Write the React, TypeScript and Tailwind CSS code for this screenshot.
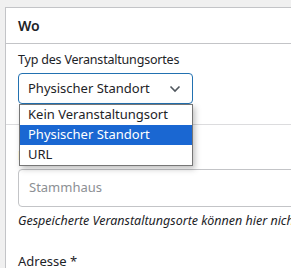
import React from "react";

export default function App() {
  const font = { fontFamily: '"Noto Sans", "Open Sans", sans-serif' };
  return (
    <div
      className="w-[291px] h-[268px] overflow-hidden bg-[#f0f0f0] pl-[5px] pt-[7px] text-[#1d2327]"
      style={font}
    >
      <div className="w-[320px] h-[300px] bg-white border border-[#c3c4c7]">
        <div className="h-[36px] px-[12px] flex items-center border-b border-[#c3c4c7] text-[14px] font-semibold">
          Wo
        </div>
        <div className="px-[12px] pt-[6px]">
          <div className="text-[12.5px] tracking-[-0.2px] leading-[20px]">Typ des Veranstaltungsortes</div>
          <div className="relative mt-[3px] w-[175px]">
            <div className="h-[31px] border border-[#2271b1] rounded-[4px] flex items-center justify-between pl-[9px] pr-[9px] text-[13px]">
              <span>Physischer Standort</span>
              <svg width="12" height="8" viewBox="0 0 12 8" className="mr-[2px]">
                <path d="M1.5 1.5 L6 6 L10.5 1.5" fill="none" stroke="#50575e" strokeWidth="1.6" />
              </svg>
            </div>
            <div className="absolute left-[1px] top-[31px] w-[174px] z-10 bg-white border border-[#767676] shadow-[2px_3px_6px_rgba(0,0,0,0.25)] text-[13px]">
              <div className="h-[20px] flex items-center pl-[8px]">Kein Veranstaltungsort</div>
              <div className="h-[20px] flex items-center pl-[8px] bg-[#1a67d2] text-white">Physischer Standort</div>
              <div className="h-[20px] flex items-center pl-[8px]">URL</div>
            </div>
          </div>
          <div className="mt-[20px] border-t border-[#dcdcde] -mx-[12px]" />
          <div className="mt-[20px] text-[13px] leading-[20px]">
            Name <span className="text-[#d63638]">*</span>
          </div>
          <div className="mt-[4px] h-[38px] border border-[#c3c4c7] rounded-[4px] flex items-center pl-[10px] text-[13px] text-[#8c8f94]">
            Stammhaus
          </div>
          <div className="mt-[4px] text-[12.5px] leading-[20px] italic whitespace-nowrap">
            Gespeicherte Veranstaltungsorte können hier nicht ausgewählt werden.
          </div>
          <div className="mt-[20px] text-[13px] leading-[20px]">
            Adresse <span>*</span>
          </div>
        </div>
      </div>
    </div>
  );
}
